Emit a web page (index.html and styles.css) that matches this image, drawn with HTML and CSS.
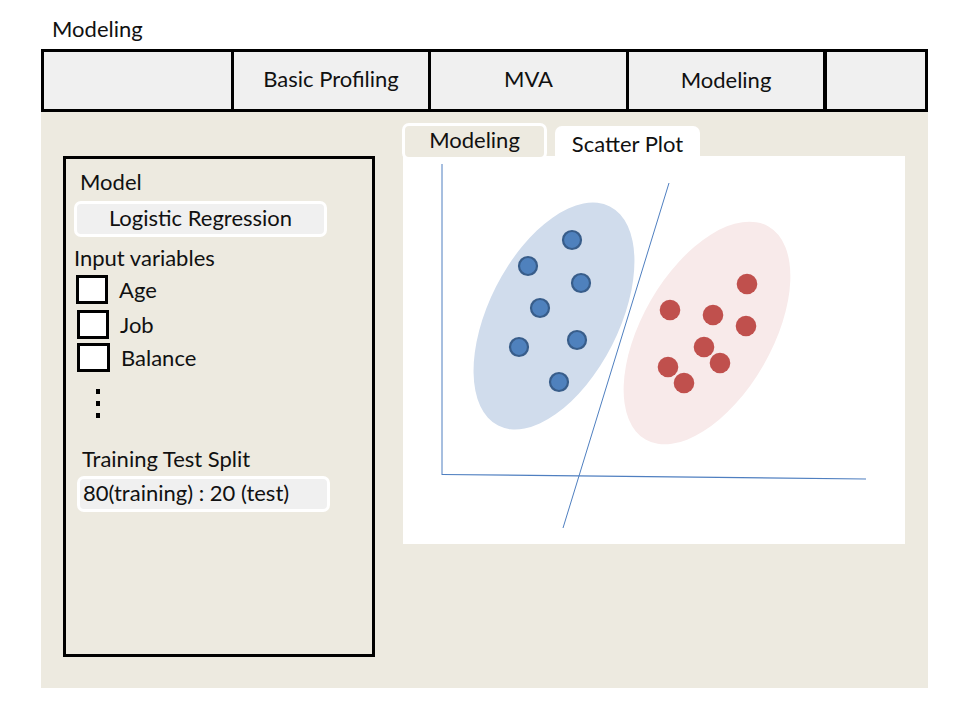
FILE: index.html
```html
<!DOCTYPE html>
<html>
<head>
<meta charset="utf-8">
<link rel="stylesheet" href="styles.css">
</head>
<body>
<div class="page">
  <div class="title">Modeling</div>
  <div class="tabbar">
    <div class="tab t1"></div>
    <div class="tab t2">Basic Profiling</div>
    <div class="tab t3">MVA</div>
    <div class="tab t4 active">Modeling</div>
    <div class="tab t5"></div>
  </div>
  <div class="main">
    <div class="panel">
      <div class="label model-label">Model</div>
      <div class="pill model-pill">Logistic Regression</div>
      <div class="label inputs-label">Input variables</div>
      <div class="check-row r1"><span class="box"></span><span class="clabel">Age</span></div>
      <div class="check-row r2"><span class="box"></span><span class="clabel">Job</span></div>
      <div class="check-row r3"><span class="box"></span><span class="clabel cl3">Balance</span></div>
      <div class="vdots"><span></span><span></span><span></span></div>
      <div class="label split-label">Training Test Split</div>
      <div class="pill split-pill">80(training) : 20 (test)</div>
    </div>
    <div class="right">
      <div class="subtabs">
        <div class="subtab sub-model">Modeling</div>
        <div class="subtab sub-scatter">Scatter Plot</div>
      </div>
      <div class="plot">
        <svg width="502" height="388" viewBox="403 155 502 388" xmlns="http://www.w3.org/2000/svg">
          <ellipse cx="554" cy="315" rx="65" ry="123" transform="rotate(27 554 315)" fill="#d0dcec"/>
          <ellipse cx="707" cy="332" rx="65" ry="123" transform="rotate(30 707 332)" fill="#f8eaea"/>
          <line x1="442" y1="163" x2="442" y2="474" stroke="#4f7fc0" stroke-width="1"/>
          <line x1="442" y1="473.5" x2="866" y2="478" stroke="#4f7fc0" stroke-width="1.2"/>
          <line x1="669" y1="182" x2="563" y2="527" stroke="#4f7fc0" stroke-width="1"/>
          <g fill="#4f81bd" stroke="#385d8a" stroke-width="2.2">
            <circle cx="572" cy="239" r="9"/>
            <circle cx="528" cy="265" r="9"/>
            <circle cx="581" cy="282" r="9"/>
            <circle cx="540" cy="307" r="9"/>
            <circle cx="519" cy="346" r="9"/>
            <circle cx="577" cy="339" r="9"/>
            <circle cx="559" cy="381" r="9"/>
          </g>
          <g fill="#c0504d">
            <circle cx="747" cy="283" r="10.3"/>
            <circle cx="670" cy="309" r="10.3"/>
            <circle cx="713" cy="314" r="10.3"/>
            <circle cx="746" cy="325" r="10.3"/>
            <circle cx="704" cy="346" r="10.3"/>
            <circle cx="720" cy="362" r="10.3"/>
            <circle cx="668" cy="366" r="10.3"/>
            <circle cx="684" cy="382" r="10.3"/>
          </g>
        </svg>
      </div>
    </div>
  </div>
</div>
</body>
</html>
```
FILE: styles.css
```css
* { box-sizing: border-box; }
html, body { margin: 0; padding: 0; background: #ffffff; }
body {
  font-family: Lato, "Open Sans", "Liberation Sans", sans-serif;
  font-size: 22px;
  color: #111;
  width: 960px;
  height: 720px;
  overflow: hidden;
}
.page { padding-left: 41px; }
.title {
  padding-left: 11px;
  padding-top: 17px;
  height: 49px;
  line-height: 24px;
}
.tabbar {
  display: flex;
  width: 887px;
  height: 63px;
  border: 3px solid #000;
  background: #f0f0f0;
}
.tab {
  display: flex;
  align-items: center;
  justify-content: center;
  height: 100%;
  border-left: 3px solid #000;
  padding-bottom: 4px;
}
.t1 { width: 187px; border-left: none; }
.t2 { width: 197px; }
.t3 { width: 198px; }
.t4 { width: 198px; padding-bottom: 2px; }
.t5 { flex: 1; }
.active { border-right: 1px solid #000; }
.main {
  display: flex;
  width: 887px;
  height: 576px;
  background: #edeae0;
}
.panel {
  margin-left: 22px;
  margin-top: 44px;
  width: 312px;
  height: 501px;
  border: 3px solid #000;
  display: flex;
  flex-direction: column;
  padding-top: 11px;
}
.label { line-height: 24px; }
.model-label { margin-left: 14px; }
.pill {
  background: #f0f0f0;
  border: 3px solid #ffffff;
  border-radius: 7px;
  height: 36px;
  width: 253px;
  line-height: 28px;
}
.model-pill { margin-left: 8px; margin-top: 7px; text-align: center; }
.inputs-label { margin-left: 8px; margin-top: 9px; }
.check-row {
  display: flex;
  align-items: center;
  height: 29px;
  line-height: 24px;
}
.r1 { margin-left: 10px; margin-top: 5px; }
.r2 { margin-left: 11px; margin-top: 6px; }
.r3 { margin-left: 11px; margin-top: 4px; }
.box {
  width: 32px;
  height: 29px;
  background: #fff;
  border: 3px solid #000;
}
.r3 .box { width: 33px; }
.clabel { margin-left: 11px; }
.cl3 { margin-left: 11px; }
.vdots {
  display: flex;
  flex-direction: column;
  gap: 7px;
  margin-left: 30px;
  margin-top: 17px;
}
.vdots span {
  width: 4px;
  height: 5px;
  background: #000;
}
.split-label { margin-left: 16px; margin-top: 29px; }
.split-pill { margin-left: 11px; margin-top: 5px; padding-left: 3px; }
.right {
  margin-left: 27px;
  margin-top: 11px;
  display: flex;
  flex-direction: column;
  position: relative;
}
.subtabs {
  display: flex;
  align-items: flex-start;
  height: 33px;
}
.subtab {
  width: 145px;
  text-align: center;
  line-height: 26px;
  border-radius: 7px 7px 0 0;
}
.sub-model {
  height: 37px;
  background: #edeae0;
  border: 3px solid #ffffff;
  border-radius: 7px;
  padding-top: 1px;
  position: relative;
  z-index: 1;
}
.sub-scatter {
  margin-left: 8px;
  margin-top: 3px;
  height: 32px;
  background: #ffffff;
  padding-top: 5px;
}
.plot {
  margin-left: 1px;
  width: 502px;
  height: 388px;
  background: #ffffff;
}
.plot svg { display: block; }
```
